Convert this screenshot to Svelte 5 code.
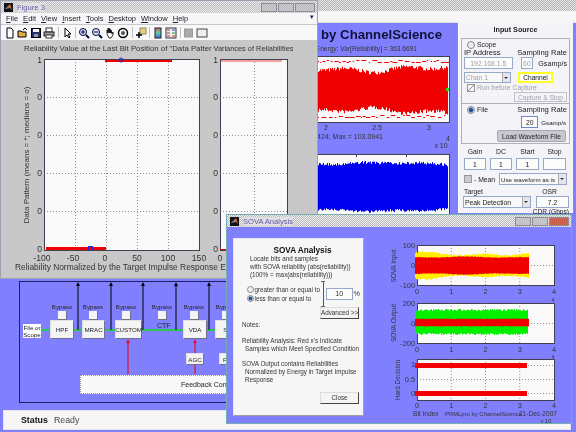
<script>
  function rng(seed) {
    let s = seed;
    return () => {
      s = (s * 16807) % 2147483647;
      return s / 2147483647;
    };
  }

  // Vertical 1px strokes around a centre line: lumpy envelope plus jitter.
  function band(x0, x1, yc, amp, jitter, seed, lump = 0.12) {
    const r = rng(seed);
    let d = '';
    for (let x = x0; x <= x1; x += 1) {
      const env = amp * (1 + lump * Math.sin(x / 9 + seed) + lump * Math.sin(x / 23 + seed * 2));
      const up = env + r() * jitter;
      const dn = env + r() * jitter;
      d += `M${x + 0.5} ${(yc - up).toFixed(1)}V${(yc + dn).toFixed(1)}`;
    }
    return d;
  }

  // Scattered outlier dashes on a row.
  function specks(x0, x1, y, h, seed) {
    const r = rng(seed);
    let d = '';
    let x = x0;
    while (x < x1) {
      const w = 1 + r() * 4;
      d += `M${x.toFixed(1)} ${(y + 0.5 + Math.floor(r() * h)).toFixed(1)}h${w.toFixed(1)}`;
      x += w + r() * 3;
    }
    return d;
  }

  const redMain = band(318, 447, 90, 19, 4, 7, 0.1);
  const redTop = specks(318, 447, 60, 3, 11);
  const redBot = specks(318, 447, 115, 3, 13);
  const blueMain = band(318, 447, 187, 22, 3, 5, 0.03);

  const sovaYellow = band(415, 528, 264.5, 11, 1.5, 17, 0.1);
  const sovaRed = band(415, 528, 264.5, 8, 0.5, 19, 0.05);
  const sovaGreen = band(416, 527, 321, 11, 2, 23, 0);
  const sovaRed2 = band(415, 528, 321.5, 3.5, 0.5, 29, 0);

  const menu = ['File', 'Edit', 'View', 'Insert', 'Tools', 'Desktop', 'Window', 'Help'];

  const grids = [75, 106, 137, 168];
  const figRows = [98, 136, 174, 212];
  const figXTicks = [
    ['-100', 42], ['-50', 73], ['0', 105], ['50', 137], ['100', 168], ['150', 199]
  ];

  const sovaX = [417, 451.25, 485.5, 519.75, 554];

  const blocks = [
    { name: 'HPF', x: 30, w: 24 },
    { name: 'MRAC', x: 62, w: 23 },
    { name: 'CUSTOM', x: 95, w: 27 },
    { name: 'VDA', x: 163, w: 24 },
    { name: 'SAM', x: 195, w: 30 }
  ];
  const bypass = [34, 65, 98, 134, 166, 198];
  const ups = [59, 92, 124, 157, 190];
</script>

<div class="desktop">
  <!-- Main window -->
  <div class="main">
    <div class="titlebar"></div>
    <div class="mainmenu"></div>

    <div class="top-area">
      <div class="plots">
        <div class="heading">by ChannelScience</div>
        <svg class="mainplots" viewBox="318 44 140 237" width="140" height="237">
          <text x="417" y="51" text-anchor="end" class="t66">Energy:  Var[Reliability] = 363.6691</text>
          <rect x="300" y="56.5" width="149.5" height="66" class="axes" />
          <path d={redMain} class="red" />
          <path d={redTop} class="red" />
          <path d={redBot} class="red" />
          <rect x="446" y="88" width="3" height="3" fill="#20e020" />
          <text x="326" y="130" text-anchor="middle" class="t7">2</text>
          <text x="377" y="130" text-anchor="middle" class="t7">2.5</text>
          <text x="429" y="130" text-anchor="middle" class="t7">3</text>
          <text x="383" y="139" text-anchor="end" class="t7">0424; Max = 103.0941</text>
          <text x="448" y="141" text-anchor="middle" class="t7">4</text>
          <text x="441" y="148" text-anchor="middle" class="t7">x 10</text>
          <rect x="300" y="154.5" width="149.5" height="70" class="axes" />
          <path d={blueMain} stroke="#0000f0" fill="none" />
          <path d="M406.5 154v3M356.5 154v3" class="tick" />
        </svg>
      </div>

      <section class="input-panel">
        <h2>Input Source</h2>
        <div class="box scope">
          <label class="row"><span class="radio"></span>Scope</label>
          <div class="row between"><span class="lbl">IP Address</span><span class="lbl">Sampling Rate</span></div>
          <div class="row between">
            <span class="field ip dis">192.168.1.5</span>
            <span class="field rate dis">60</span>
            <span class="unit">Gsamp/s</span>
          </div>
          <div class="row chanrow">
            <span class="select chan dis">Chan 1<i class="arrow"></i></span>
            <span class="channel">Channel</span>
          </div>
          <label class="row dis"><span class="check on"></span>Run before Capture</label>
          <div class="row end"><span class="btn flat dis">Capture &amp; Stop</span></div>
        </div>
        <div class="box file">
          <div class="row between">
            <label class="row"><span class="radio on"></span>File</label>
            <span class="lbl">Sampling Rate</span>
          </div>
          <div class="row end ratebox">
            <span class="field rate2">20</span>
            <span class="unit small">Gsamp/s</span>
          </div>
          <div class="row end"><span class="btn load">Load Waveform File</span></div>
        </div>
        <div class="gains">
          <span>Gain</span><span>DC</span><span>Start</span><span>Stop</span>
          <span class="field">1</span><span class="field">1</span><span class="field">1</span><span class="field"></span>
        </div>
        <div class="row meanrow">
          <label class="row mean"><span class="check grey"></span>- Mean</label>
          <span class="select use">Use waveform as is<i class="arrow"></i></span>
        </div>
        <div class="row between tlabels"><span>Target</span><span class="osr">OSR</span></div>
        <div class="row between">
          <span class="select peak">Peak Detection<i class="arrow"></i></span>
          <span class="field osrv">7.2</span>
        </div>
        <div class="row end cdr">CDR (Gbps)</div>
      </section>
    </div>

    <div class="diagram">
      <svg class="wires" viewBox="0 0 400 122" width="400" height="122">
        <path d="M22 49H330" stroke="#10e010" stroke-width="1.5" fill="none" />
        {#each ups as x}
          <path d="M{x} 49V3" stroke="#000" stroke-width="1" fill="none" />
          <path d="M{x - 2} 5L{x} 1L{x + 2} 5Z" fill="#000" />
        {/each}
        <path d="M109 93V60M176 93V60" stroke="#e01030" stroke-width="1.2" fill="none" />
        <path d="M107 62L109 58L111 62ZM174 62L176 58L178 62Z" fill="#e01030" />
      </svg>
      <div class="source">File or<br />Scope</div>
      {#each blocks as b}
        <div class="block" style="left:{b.x}px;width:{b.w}px">{b.name}</div>
      {/each}
      {#each bypass as x}
        <div class="bypass" style="left:{x}px">Bypass<span></span></div>
      {/each}
      <div class="ctf">CTF</div>
      <div class="block small agc">AGC</div>
      <div class="block small fir">FIR</div>
      <div class="feedback">Feedback Control</div>
    </div>

    <div class="status"><b>Status</b><span>Ready</span></div>
  </div>

  <!-- Figure 3 -->
  <div class="win fig">
    <div class="wintitle">
      <svg class="logo" viewBox="0 0 9 9" width="9" height="9">
        <rect width="9" height="9" fill="#101018" />
        <path d="M1 6L4 3L6 1L8 7L6 5Z" fill="#e07020" />
        <path d="M1 6L4 3L5 5Z" fill="#3080c0" />
      </svg>
      <span class="wname">Figure 3</span>
      <div class="ctrls"><i></i><i></i><i></i></div>
    </div>
    <nav class="menubar">
      {#each menu as m}
        <span><u>{m[0]}</u>{m.slice(1)}</span>
      {/each}
      <em>▾</em>
    </nav>
    <div class="toolbar">
      <svg viewBox="0 0 12 12"><path d="M3 1h4l2 2v8H3z" fill="#fff" stroke="#000" /></svg>
      <svg viewBox="0 0 12 12"><path d="M1 10V4h3l1 1h4v5z" fill="#e0b040" stroke="#000" /><path d="M6 3l2-2 2 2" fill="none" stroke="#000" /></svg>
      <svg viewBox="0 0 12 12"><rect x="1.5" y="1.5" width="9" height="9" fill="#203070" stroke="#000" /><rect x="3" y="2" width="6" height="3" fill="#fff" /><rect x="4" y="7" width="4" height="3" fill="#999" /></svg>
      <svg viewBox="0 0 12 12"><rect x="3" y="1" width="6" height="4" fill="#fff" stroke="#333" /><rect x="1" y="5" width="10" height="4" fill="#999" stroke="#222" /><rect x="3" y="8" width="6" height="3" fill="#fff" stroke="#333" /></svg>
      <b class="sep"></b>
      <svg viewBox="0 0 12 12"><path d="M4 1v9l2-2 2 3 1-1-2-3h3z" fill="#fff" stroke="#000" /></svg>
      <b class="sep wide"></b>
      <svg viewBox="0 0 12 12"><circle cx="5" cy="5" r="3.5" fill="#d8e8ff" stroke="#003" /><path d="M8 8l3 3" stroke="#003" stroke-width="2" /><path d="M3 5h4M5 3v4" stroke="#003" /></svg>
      <svg viewBox="0 0 12 12"><circle cx="5" cy="5" r="3.5" fill="#d8e8ff" stroke="#003" /><path d="M8 8l3 3" stroke="#003" stroke-width="2" /><path d="M3 5h4" stroke="#003" /></svg>
      <svg viewBox="0 0 12 12"><path d="M3 7V3l1 3V1l1 5V1l1 5V2l1 4V3l1 4 1-2v3l-2 3H5z" fill="#fff" stroke="#000" stroke-width=".8" /></svg>
      <svg viewBox="0 0 12 12"><circle cx="6" cy="6" r="4.5" fill="none" stroke="#000" stroke-width="1.4" /><circle cx="6" cy="6" r="2" fill="#555" /></svg>
      <b class="sep"></b>
      <svg viewBox="0 0 12 12"><rect x="5" y="1" width="6" height="6" fill="#e8d070" stroke="#887" /><path d="M1 8h6M4 5v6" stroke="#000" stroke-width="1.5" /></svg>
      <b class="sep wide"></b>
      <svg viewBox="0 0 12 12"><rect x="3" y="1" width="6" height="10" fill="url(#cb)" stroke="#223" /><defs><linearGradient id="cb" x1="0" y1="0" x2="0" y2="1"><stop offset="0" stop-color="#d06060" /><stop offset=".5" stop-color="#60d0a0" /><stop offset="1" stop-color="#4060e0" /></linearGradient></defs></svg>
      <svg viewBox="0 0 12 12"><rect x="1" y="1" width="10" height="10" fill="#eee" stroke="#334" /><path d="M2 3h3M2 6h3M2 9h3" stroke="#c03030" /><path d="M7 3h3" stroke="#3050c0" /><path d="M7 6h3" stroke="#30a050" /><path d="M7 9h3" stroke="#c03030" /></svg>
      <b class="sep"></b>
      <svg viewBox="0 0 12 12"><rect x="1.5" y="2" width="8" height="8" fill="#aaa" stroke="#999" /></svg>
      <svg viewBox="0 0 12 12"><rect x="1" y="2" width="10" height="8" fill="#eee" stroke="#444" /></svg>
    </div>
    <svg class="figplot" viewBox="1 41 316 237" width="316" height="237">
      <text x="24" y="52" class="t78">Reliability Value at the Last Bit Position of "Data Patter</text>
      <text x="213.5" y="52" class="t74">Variances of Reliabilities</text>

      <rect x="44.5" y="60.5" width="155" height="191" class="axes" />
      {#each grids as g}<path d="M{g + 0.5} 60V251" class="grid" />{/each}
      {#each figRows as r}<path d="M44 {r + 0.5}H199" class="grid" />{/each}
      <path d="M105 61.5H172" stroke="#f00000" stroke-width="3" />
      <circle cx="121" cy="61" r="2" fill="none" stroke="#2020e0" />
      <path d="M46 249.5H106" stroke="#f00000" stroke-width="3" />
      <rect x="88.5" y="247.5" width="4" height="4" fill="none" stroke="#2020e0" />
      <rect x="44.5" y="60.5" width="155" height="191" class="axes nofill" />

      <rect x="220.5" y="60.5" width="67" height="191" class="axes" />
      <path d="M254.5 60V251" class="grid" />
      {#each figRows as r}<path d="M220 {r + 0.5}H287" class="grid" />{/each}
      <path d="M221 62H282" stroke="#f8a0a0" stroke-width="2" />
      <path d="M220 250.5H226" stroke="#f00000" />

      <text x="42" y="64" text-anchor="end" class="t86">1</text>
      <text x="218" y="64" text-anchor="end" class="t86">1</text>
      {#each [...figRows, 250] as r}
        <text x="42" y={r + 3} text-anchor="end" class="t86">0</text>
        <text x="218" y={r + 3} text-anchor="end" class="t86">0</text>
      {/each}
      {#each figXTicks as [label, x]}
        <text {x} y="262" text-anchor="middle" class="t86">{label}</text>
      {/each}
      <text x="220" y="262" text-anchor="middle" class="t86">0</text>
      <text x="15" y="271" class="t84">Reliability Normalized by the Target Impulse Response Energy</text>
      <text transform="translate(29 156) rotate(-90)" text-anchor="middle" class="t8">Data Pattern (means = *; medians = o)</text>
    </svg>
  </div>

  <!-- SOVA Analysis -->
  <div class="win sova">
    <div class="wintitle">
      <svg class="logo" viewBox="0 0 9 9" width="9" height="9">
        <rect width="9" height="9" fill="#101018" />
        <path d="M1 6L4 3L6 1L8 7L6 5Z" fill="#e07020" />
        <path d="M1 6L4 3L5 5Z" fill="#3080c0" />
      </svg>
      <span class="wname">SOVA Analysis</span>
      <div class="ctrls"><i></i><i></i><i class="close"></i></div>
    </div>
    <div class="sovabody">
      <div class="sovapanel">
        <h3>SOVA Analysis</h3>
        <div class="intro">
          <p>Locate bits and samples</p>
          <p>with SOVA reliability (abs(reliability))</p>
          <p>(100% = max(abs(reliability)))</p>
        </div>
        <div class="thresh">
          <div class="radios">
            <label class="row"><span class="radio"></span>greater than or equal to</label>
            <label class="row"><span class="radio on"></span>less than or equal to</label>
          </div>
          <div class="slider"><i></i></div>
          <span class="field pct">10</span>
          <span class="pcts">%</span>
        </div>
        <div class="row end adv"><span class="btn3d">Advanced &gt;&gt;</span></div>
        <p class="note">Notes:</p>
        <p class="note gap">Reliability Analysis: Red x's Indicate</p>
        <p class="note in">Samples which Meet Specified Condition</p>
        <p class="note gap2">SOVA Output contains Reliabilities</p>
        <p class="note in">Normalized by Energy in Target Impulse</p>
        <p class="note in">Response</p>
        <div class="row end closer"><span class="btn3d">Close</span></div>
      </div>
      <svg class="sovaplots" viewBox="366 226 205 197" width="205" height="197">
        <rect x="417.5" y="244.5" width="137" height="40" class="axes" />
        {#each sovaX.slice(1, 4) as x}<path d="M{x} 244V284" class="grid" />{/each}
        <path d="M417 264.5H554" class="grid" />
        <path d={sovaYellow} stroke="#ffee00" fill="none" />
        <path d={sovaRed} stroke="#f00000" fill="none" />

        <rect x="417.5" y="302.5" width="137" height="40" class="axes" />
        {#each sovaX.slice(1, 4) as x}<path d="M{x} 302V342" class="grid" />{/each}
        <path d="M417 322.5H554" class="grid" />
        <path d={sovaGreen} stroke="#00f000" fill="none" />
        <path d={sovaRed2} stroke="#f00000" fill="none" />

        <rect x="417.5" y="358.5" width="137" height="41" class="axes" />
        {#each sovaX.slice(1, 4) as x}<path d="M{x} 358V399" class="grid" />{/each}
        <path d="M417 364.5H554M417 378.5H554M417 392.5H554" class="grid" />
        <path d="M415 364.5H527M415 392.5H527" stroke="#f00000" stroke-width="5" />

        {#each [[100, 247], [0, 267], [-100, 287]] as [l, y]}
          <text x="415" y={y} text-anchor="end" class="t7b">{l}</text>
        {/each}
        {#each [[200, 305], [0, 325], [-200, 345]] as [l, y]}
          <text x="415" y={y} text-anchor="end" class="t7b">{l}</text>
        {/each}
        {#each [['1', 366], ['0.5', 381], ['0', 395]] as [l, y]}
          <text x="415" y={y} text-anchor="end" class="t7b">{l}</text>
        {/each}
        {#each [293, 351, 407] as y}
          {#each sovaX as x, i}
            <text {x} {y} text-anchor="middle" class="t7b">{i}</text>
          {/each}
        {/each}
        <text x="553" y="300.5" text-anchor="middle" class="t5">4</text>
        <text x="553" y="357.5" text-anchor="middle" class="t5">4</text>
        <text transform="translate(396 265) rotate(-90)" text-anchor="middle" class="t6">SOVA Input</text>
        <text transform="translate(396 322) rotate(-90)" text-anchor="middle" class="t6">SOVA Output</text>
        <text transform="translate(400 379) rotate(-90)" text-anchor="middle" class="t6">Hard Decision</text>
        <text x="413" y="415" class="t66">Bit Index</text>
        <text x="445" y="415" class="t59">PRMLpro by ChannelScience</text>
        <text x="557" y="415" text-anchor="end" class="t66">21-Dec-2007</text>
        <text x="546" y="421.5" text-anchor="middle" class="t5">x 10</text>
      </svg>
    </div>
  </div>
</div>

<style>
  :global(body) {
    margin: 0;
    background: #f2f2f2;
  }

  .desktop {
    position: relative;
    width: 576px;
    height: 432px;
    overflow: hidden;
    font-family: "Liberation Sans", Arial, sans-serif;
    font-size: 7.5px;
    color: #222;
    filter: blur(0.4px);
  }

  p, h2, h3 { margin: 0; font-weight: normal; }

  /* Main window */
  .main {
    width: 576px;
    height: 432px;
    display: flex;
    flex-direction: column;
    background: #8080ff;
  }

  .titlebar {
    height: 11px;
    background: repeating-conic-gradient(#b4b4b4 0 25%, #e6e6e6 0 50%) 0 0 / 2px 2px;
  }

  .mainmenu {
    height: 12px;
    background: #f6f6f6;
    border-bottom: 1px solid #ddd;
    box-sizing: border-box;
  }

  .top-area {
    display: flex;
    height: 258px;
  }

  .plots {
    width: 458px;
    flex: none;
    display: flex;
    flex-direction: column;
    align-items: flex-end;
  }

  .heading {
    height: 21px;
    margin-right: 16px;
    font-size: 13.2px;
    font-weight: bold;
    line-height: 24px;
    color: #10103a;
    white-space: nowrap;
  }

  .mainplots { display: block; overflow: visible; }

  /* Input panel */
  .input-panel {
    width: 115px;
    height: 191px;
    margin-top: -1px;
    box-sizing: border-box;
    padding: 0 3px 0 2px;
    background: #f4f4f8;
    border-left: 1px solid #fff;
    display: flex;
    flex-direction: column;
    font-size: 6.8px;
    white-space: nowrap;
  }

  h2 {
    height: 16px;
    line-height: 16px;
    text-align: center;
    font-size: 7.2px;
    font-weight: bold;
  }

  .box {
    border: 1px solid #b0b0c0;
    padding: 1px 2px;
    display: flex;
    flex-direction: column;
    box-sizing: border-box;
  }

  .scope { height: 69px; }
  .file { height: 42px; border-top: 0; margin-bottom: 3px; }

  .row {
    display: flex;
    align-items: center;
  }

  .between { justify-content: space-between; }
  .end { justify-content: flex-end; }

  label.row { gap: 2px; height: 9px; margin-left: 3px; }

  .lbl { font-size: 7.6px; line-height: 8px; }

  .radio {
    width: 6px;
    height: 6px;
    border-radius: 50%;
    border: 1px solid #888;
    background: #eee;
    flex: none;
  }

  .radio.on { background: radial-gradient(#2050a0 40%, #eee 70%); }

  .check {
    width: 6px;
    height: 6px;
    border: 1px solid #999;
    background: #f8f8f8;
    flex: none;
  }

  .check.on { background: linear-gradient(135deg, #f8f8f8 45%, #888 50%, #f8f8f8 55%); }
  .check.grey { background: #ccc; width: 6px; height: 6px; }

  .field {
    box-sizing: border-box;
    height: 12px;
    border: 1px solid #98a8c8;
    background: #fcfcfc;
    display: flex;
    align-items: center;
    justify-content: center;
  }

  .dis { color: #a0a0a8; }

  .ip { width: 50px; }
  .rate { width: 13px; margin-left: 8px; }
  .unit { font-size: 7.2px; margin-left: 5px; }
  .unit.small { font-size: 6.2px; margin-left: 3px; }

  .select {
    box-sizing: border-box;
    height: 12px;
    border: 1px solid #98a8c8;
    background: #f8f8f8;
    padding-left: 1px;
    display: flex;
    align-items: center;
    justify-content: space-between;
    white-space: nowrap;
  }

  .arrow {
    width: 7px;
    align-self: stretch;
    background: #e4e4ec;
    border-left: 1px solid #aaa;
    position: relative;
    flex: none;
  }

  .arrow::after {
    content: "";
    position: absolute;
    left: 1px;
    top: 4px;
    border: 2.5px solid transparent;
    border-top-color: #333;
  }

  .chanrow { margin-top: 3px; height: 11px; }
  .chan { width: 47px; height: 11px; }

  .channel {
    margin-left: 7px;
    width: 35px;
    height: 11px;
    box-sizing: border-box;
    border: 2px solid #ffff20;
    background: #fff;
    text-align: center;
    line-height: 7px;
    color: #111;
    font-size: 6.6px;
  }

  .btn {
    box-sizing: border-box;
    display: flex;
    align-items: center;
    justify-content: center;
  }

  .flat {
    width: 53px;
    height: 10px;
    border: 1px solid #c0c0c8;
    background: #f4f4f8;
    font-size: 6.6px;
  }

  .load {
    width: 69px;
    height: 12px;
    background: #c8c8d0;
    border: 1px solid #a8a8b0;
    border-radius: 2px;
    font-size: 6.6px;
    margin-right: 1px;
  }

  .ratebox { margin: 2px 1px 2px 0; }
  .rate2 { width: 17px; border-color: #7088c0; }

  .gains {
    display: grid;
    grid-template-columns: 22px 22px 23px 23px;
    column-gap: 4px;
    justify-items: stretch;
    text-align: center;
    line-height: 9px;
    padding-left: 3px;
    row-gap: 2px;
  }

  .meanrow { margin-top: 3px; height: 12px; }
  .mean { width: 36px; }
  .use { width: 68px; margin-left: -1px; font-size: 6.2px; }

  .tlabels { height: 9px; padding: 0 13px 0 3px; margin-top: 2px; line-height: 9px; }

  .peak { width: 68px; margin-left: 2px; }
  .osrv { width: 33px; margin-right: 1px; }
  .cdr { height: 9px; padding-right: 1px; font-size: 6.6px; }

  /* Diagram */
  .diagram {
    position: relative;
    margin-left: 19px;
    width: 400px;
    height: 122px;
    box-sizing: border-box;
    border: 1px solid #202060;
    border-right: 0;
    flex: none;
    font-size: 6.2px;
  }

  .wires { position: absolute; left: -1px; top: -1px; }

  .source {
    position: absolute;
    left: 3px;
    top: 42px;
    width: 18px;
    height: 14px;
    background: #fff;
    text-align: center;
    line-height: 7px;
    color: #222;
  }

  .block {
    position: absolute;
    top: 38px;
    height: 19px;
    box-sizing: border-box;
    background: #f4f4f4;
    border: 1px solid #e0e0e8;
    border-right-color: #707090;
    border-bottom-color: #707090;
    display: flex;
    align-items: center;
    justify-content: center;
  }

  .block.small { top: 71px; height: 12px; width: 18px; }
  .agc { left: 166px; }
  .fir { left: 199px; }

  .bypass {
    position: absolute;
    top: 21px;
    width: 16px;
    display: flex;
    flex-direction: column;
    align-items: center;
    line-height: 7px;
    white-space: nowrap;
  }

  .bypass span {
    width: 8px;
    height: 8px;
    margin-top: 1px;
    background: #f4f4f4;
    border-right: 1px solid #707090;
    border-bottom: 1px solid #707090;
  }

  .ctf { position: absolute; left: 137px; top: 40px; font-size: 7px; }

  .feedback {
    position: absolute;
    left: 60px;
    top: 93px;
    width: 300px;
    height: 19px;
    box-sizing: border-box;
    background: #f8f8f8;
    border: 1px dotted #999;
    padding-left: 100px;
    line-height: 17px;
    font-size: 7px;
  }

  .status {
    margin: 7px 5px 0 3px;
    height: 20px;
    flex: none;
    background: #f6f6f6;
    border: 1px solid #e4e4ec;
    box-sizing: border-box;
    display: flex;
    align-items: center;
    gap: 6px;
    padding-left: 17px;
    font-size: 8.8px;
    color: #444;
  }

  .status b { color: #111; }

  /* Floating windows */
  .win {
    position: absolute;
    box-sizing: border-box;
    display: flex;
    flex-direction: column;
    border: 1px solid #a0a0b0;
  }

  .fig {
    left: 0;
    top: 0;
    width: 318px;
    height: 279px;
    background: #c8c8c8;
  }

  .sova {
    left: 226px;
    top: 214px;
    width: 346px;
    height: 210px;
    background: #8080ff;
    border-color: #70b0b0;
  }

  .wintitle {
    height: 12px;
    flex: none;
    display: flex;
    align-items: center;
    padding: 0 2px 0 3px;
    gap: 4px;
    background: repeating-conic-gradient(#bcbcbc 0 25%, #ececec 0 50%) 0 0 / 2px 2px;
  }

  .wname {
    font-size: 7.6px;
    color: #6858a0;
    background: #e0e0e4;
  }

  .ctrls {
    margin-left: auto;
    display: flex;
    gap: 1px;
    height: 9px;
  }

  .ctrls i {
    width: 16px;
    background: #c4c4c8;
    border: 1px solid #8c8c94;
    box-sizing: border-box;
  }

  .ctrls i.close { background: #d06050; width: 20px; }
  .fig .ctrls i:last-child { width: 20px; }

  .menubar {
    height: 11px;
    flex: none;
    background: #f6f6f6;
    display: flex;
    align-items: center;
    position: relative;
    padding-left: 5px;
    gap: 5px;
    font-size: 7.5px;
    color: #223;
  }

  .menubar u { text-decoration: underline; }

  .menubar em {
    position: absolute;
    right: 3px;
    top: 0;
    font-style: normal;
    font-size: 7px;
  }

  .toolbar {
    height: 15px;
    flex: none;
    margin-top: 1px;
    background: #f8f8f8;
    display: flex;
    align-items: center;
    padding-left: 3px;
    gap: 1px;
  }

  .toolbar svg { width: 12px; height: 12px; flex: none; }

  .sep {
    width: 1px;
    height: 11px;
    background: #c0c0c0;
    margin: 0 1.5px;
    flex: none;
  }

  .sep.wide { margin: 0 1px; }

  .figplot { display: block; }

  .sovabody {
    display: flex;
    align-items: flex-start;
    height: 197px;
  }

  .sovapanel {
    width: 131px;
    height: 178px;
    margin: 11px 0 0 6px;
    flex: none;
    box-sizing: border-box;
    background: #f6f6f6;
    border: 1px solid #e8e8f0;
    border-right-color: #a0a0a8;
    border-bottom-color: #a0a0a8;
    padding: 7px 3px 0 8px;
    font-size: 6.3px;
    line-height: 8px;
    color: #333;
    white-space: nowrap;
  }

  h3 {
    font-size: 8.2px;
    font-weight: bold;
    text-align: center;
    color: #111;
    line-height: 9px;
    margin-left: 3px;
  }

  .intro { padding-left: 8px; margin-top: 0; }

  .thresh {
    display: flex;
    align-items: center;
    margin-top: 2px;
    height: 26px;
    margin-left: 5px;
  }

  .radios { width: 74px; flex: none; display: flex; flex-direction: column; }
  .radios label.row { margin-left: 0; gap: 0.5px; }
  .thresh .radio { width: 5px; height: 5px; }

  .slider {
    width: 4px;
    height: 24px;
    border-top: 1px solid #666;
    border-bottom: 1px solid #666;
    position: relative;
    margin-right: 1px;
    flex: none;
  }

  .slider i {
    position: absolute;
    left: 2px;
    top: 0;
    bottom: 0;
    border-left: 1px solid #555;
  }

  .pct { width: 28px; font-size: 7.2px; }
  .pcts { margin-left: 1px; font-size: 7.2px; }

  .btn3d {
    box-sizing: border-box;
    width: 39px;
    height: 12px;
    text-align: center;
    line-height: 10px;
    background: #f4f4f4;
    border-right: 1px solid #444;
    border-bottom: 1px solid #444;
    border-left: 1px solid #ddd;
    border-top: 1px solid #ddd;
    white-space: nowrap;
    display: block;
  }

  .adv { padding-right: 1px; margin-top: 0; }
  .note { line-height: 8px; margin-left: 0; }
  .sovapanel > .note:not(.gap):not(.gap2):not(.in) { margin-top: 2px; }
  .note.gap { margin-top: 8px; }
  .note.gap2 { margin-top: 7px; }
  .note.in { padding-left: 3px; }
  .closer { margin-top: 8px; padding-right: 1px; }

  .sovaplots { display: block; flex: none; margin-left: 2px; }

  /* SVG plot styles */
  svg text {
    font-family: "Liberation Sans", Arial, sans-serif;
    fill: #333;
  }

  .t84 { font-size: 8.4px; }
  .t86 { font-size: 8.6px; }
  .t78 { font-size: 7.8px; }
  .t74 { font-size: 7.4px; }
  .t8 { font-size: 8px; }
  .t7 { font-size: 7px; }
  .t66 { font-size: 6.6px; }
  .t59 { font-size: 5.9px; }
  .t7b { font-size: 7.4px; }
  .t6 { font-size: 6.4px; }
  .t5 { font-size: 5.6px; }

  .axes { fill: #f9f9f9; stroke: #404050; stroke-width: 1; }
  .axes.nofill { fill: none; }
  .red { stroke: #f00000; fill: none; }
  .tick { stroke: #404050; fill: none; }
  .grid { stroke: #666; stroke-width: 0.7; stroke-dasharray: 1 2; fill: none; }
</style>
